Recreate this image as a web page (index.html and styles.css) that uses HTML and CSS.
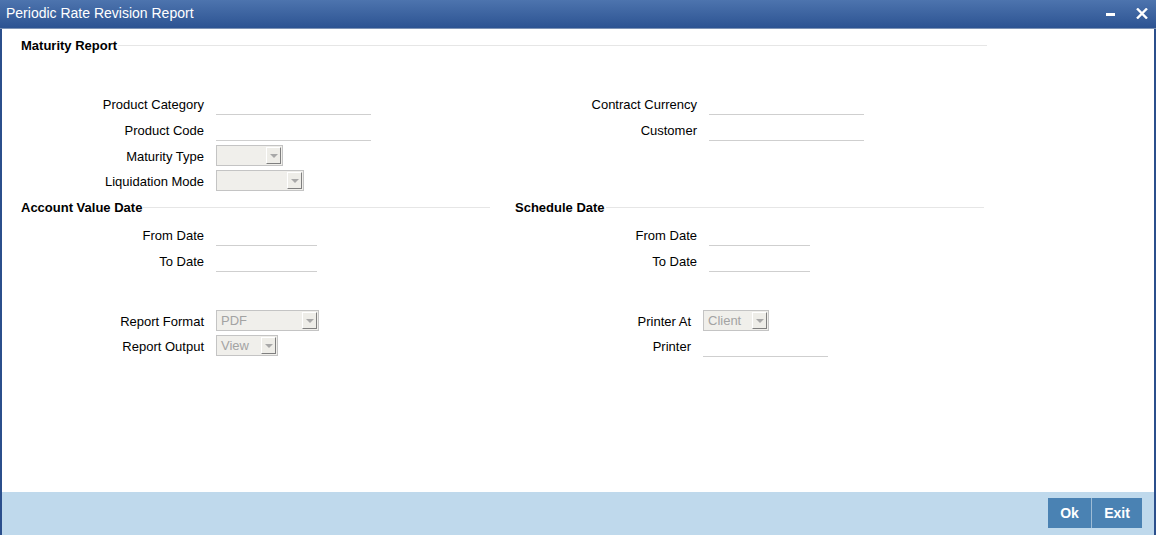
FILE: index.html
```html
<!DOCTYPE html>
<html>
<head>
<meta charset="utf-8">
<title>Periodic Rate Revision Report</title>
<link rel="stylesheet" href="styles.css">
</head>
<body>
<div class="window">
  <div class="titlebar">
    <span class="title">Periodic Rate Revision Report</span>
    <div class="controls">
      <span class="min-btn"></span>
      <svg class="close-btn" width="12" height="11" viewBox="0 0 12 11"><path d="M1 0.5 L11 10.5 M11 0.5 L1 10.5" stroke="#fff" stroke-width="2.4" fill="none"/></svg>
    </div>
  </div>
  <div class="frame">
    <div class="content">
      <div class="section-head maturity-head"><span>Maturity Report</span><i class="rule"></i></div>

      <div class="form-grid maturity-grid">
        <label class="lbl">Product Category</label>
        <div class="cell"><span class="text-field w155"></span></div>
        <label class="lbl">Contract Currency</label>
        <div class="cell"><span class="text-field w155"></span></div>

        <label class="lbl">Product Code</label>
        <div class="cell"><span class="text-field w155"></span></div>
        <label class="lbl">Customer</label>
        <div class="cell"><span class="text-field w155"></span></div>

        <label class="lbl">Maturity Type</label>
        <div class="cell"><span class="select w66"><span class="val"></span><span class="arrow"></span></span></div>
        <span></span><span></span>

        <label class="lbl">Liquidation Mode</label>
        <div class="cell"><span class="select w87"><span class="val"></span><span class="arrow"></span></span></div>
        <span></span><span></span>
      </div>

      <div class="form-grid date-grid">
        <div class="section-head left-head"><span>Account Value Date</span><i class="rule"></i></div>
        <div class="section-head right-head"><span>Schedule Date</span><i class="rule"></i></div>

        <label class="lbl">From Date</label>
        <div class="cell"><span class="text-field w101"></span></div>
        <label class="lbl">From Date</label>
        <div class="cell"><span class="text-field w101"></span></div>

        <label class="lbl">To Date</label>
        <div class="cell"><span class="text-field w101"></span></div>
        <label class="lbl">To Date</label>
        <div class="cell"><span class="text-field w101"></span></div>
      </div>

      <div class="form-grid report-grid">
        <label class="lbl">Report Format</label>
        <div class="cell"><span class="select w102"><span class="val">PDF</span><span class="arrow"></span></span></div>
        <label class="lbl">Printer At</label>
        <div class="cell"><span class="select w65"><span class="val">Client</span><span class="arrow"></span></span></div>

        <label class="lbl">Report Output</label>
        <div class="cell"><span class="select w61"><span class="val">View</span><span class="arrow"></span></span></div>
        <label class="lbl">Printer</label>
        <div class="cell"><span class="text-field w125"></span></div>
      </div>
    </div>
    <div class="footer">
      <button class="btn btn-ok">Ok</button>
      <button class="btn btn-exit">Exit</button>
    </div>
  </div>
</div>
</body>
</html>
```

FILE: styles.css
```css
html, body {
  margin: 0;
  padding: 0;
  background: #ffffff;
}
body {
  font-family: "Liberation Sans", Arial, sans-serif;
  font-size: 13px;
  color: #000;
}
.window {
  width: 1156px;
  height: 535px;
  display: flex;
  flex-direction: column;
}
.titlebar {
  height: 28px;
  flex: 0 0 28px;
  background: linear-gradient(#4d74ae, #2c5392);
  border-bottom: 1px solid #7d93b5;
  display: flex;
  align-items: center;
  justify-content: space-between;
}
.title {
  color: #fff;
  font-size: 14px;
  margin-left: 6px;
  margin-top: -2px;
}
.controls {
  display: flex;
  align-items: center;
  margin-right: 8px;
  margin-top: -2px;
}
.min-btn {
  width: 9px;
  height: 3px;
  background: #fff;
  margin-right: 21px;
  margin-top: 2px;
}
.close-btn {
  display: block;
}
.frame {
  flex: 1;
  display: flex;
  flex-direction: column;
  border-left: 2px solid #2b4f8c;
  border-right: 2px solid #2b4f8c;
}
.content {
  flex: 1;
  background: #fff;
}
.section-head {
  display: flex;
  align-items: center;
  height: 16px;
  font-weight: bold;
  font-size: 13px;
}
.section-head .rule {
  flex: 1;
  height: 1px;
  background: #e6e6e6;
  margin-left: 1px;
}
.maturity-head {
  width: 966px;
  padding-left: 19px;
  margin-top: 8px;
}
.form-grid {
  display: grid;
}
.maturity-grid {
  grid-template-columns: 202px 293px 200px 287px;
  grid-template-rows: 26px 26px 25px 25px;
  margin-top: 38px;
}
.date-grid {
  grid-template-columns: 202px 293px 200px 287px;
  grid-template-rows: auto 26px 26px;
  margin-top: 6px;
}
.left-head {
  grid-column: 1 / 3;
  padding-left: 19px;
  padding-right: 7px;
  margin-bottom: 7px;
}
.right-head {
  grid-column: 3 / 5;
  padding-left: 18px;
  margin-bottom: 7px;
}
.report-grid {
  grid-template-columns: 202px 293px 194px 300px;
  grid-template-rows: 25px 25px;
  margin-top: 34px;
}
.lbl {
  text-align: right;
  align-self: center;
  line-height: 16px;
  padding-top: 2px;
  white-space: nowrap;
}
.cell {
  padding-left: 12px;
  display: flex;
  align-items: center;
}
.text-field {
  display: block;
  height: 22px;
  box-sizing: border-box;
  border-bottom: 1px solid #cfcfcf;
}
.w155 { width: 155px; }
.w101 { width: 101px; }
.w125 { width: 125px; }
.select {
  display: flex;
  align-items: center;
  height: 21px;
  box-sizing: border-box;
  border: 1px solid #c4c4c4;
  background: #f0efeb;
}
.w66 { width: 67px; }
.w87 { width: 88px; }
.w102 { width: 103px; }
.w61 { width: 62px; }
.w65 { width: 66px; }
.select .val {
  flex: 1;
  padding-left: 4px;
  color: #a3a3a3;
  font-size: 13px;
  line-height: 17px;
}
.select .arrow {
  position: relative;
  width: 15px;
  height: 17px;
  box-sizing: border-box;
  margin-right: 1px;
  border: 1px solid;
  border-color: #ffffff #7f7f7f #7f7f7f #ffffff;
  background: #eeede8;
}
.select .arrow::after {
  content: "";
  position: absolute;
  left: 3px;
  top: 6px;
  border-left: 4px solid transparent;
  border-right: 4px solid transparent;
  border-top: 4px solid #a8a8a8;
}
.footer {
  height: 43px;
  flex: 0 0 43px;
  background: #bfd9ec;
  display: flex;
  justify-content: flex-end;
  align-items: flex-start;
  padding-right: 12px;
  box-sizing: border-box;
}
.btn {
  margin-top: 6px;
  height: 30px;
  border: none;
  background: #4a82b3;
  color: #fff;
  font-family: "Liberation Sans", Arial, sans-serif;
  font-weight: bold;
  font-size: 14px;
  padding: 0;
}
.btn-ok {
  border-right: 1px solid #9dbcd6;
  width: 44px;
}
.btn-exit {
  width: 50px;
}
```
